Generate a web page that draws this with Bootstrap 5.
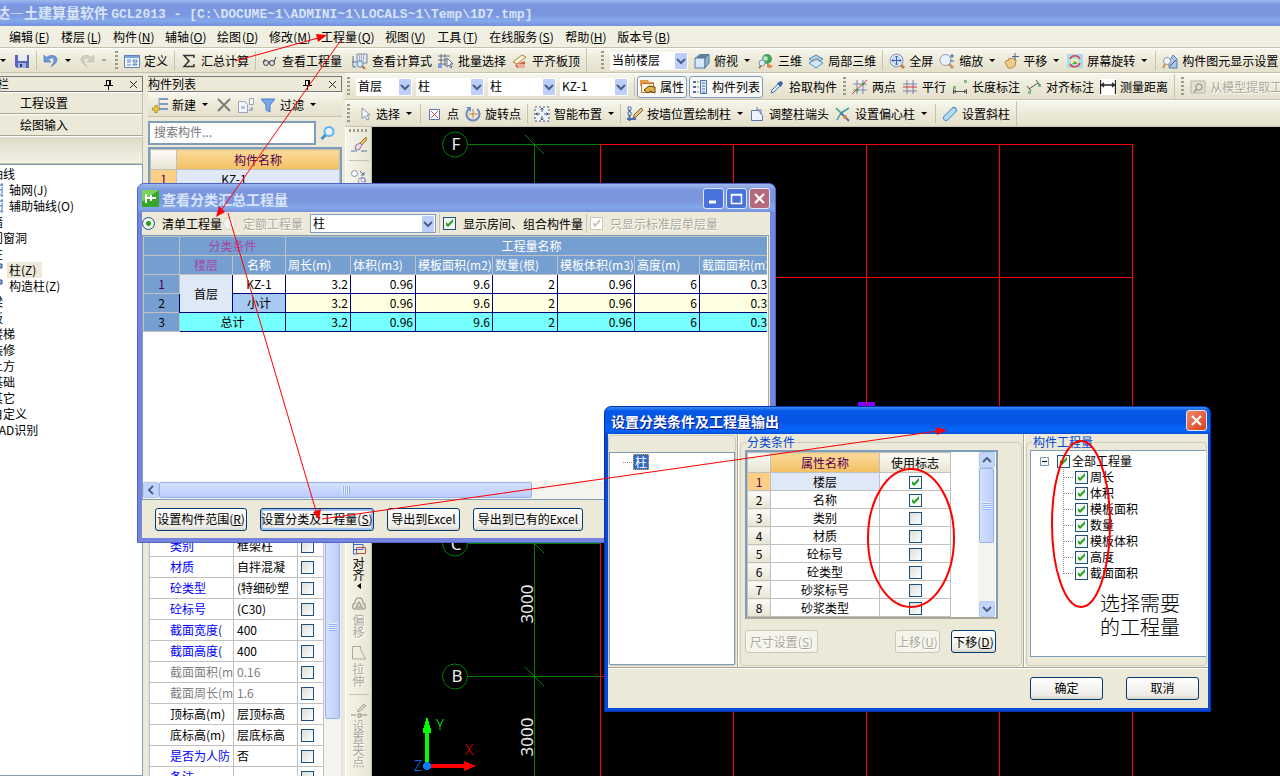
<!DOCTYPE html>
<html lang="zh-CN">
<head>
<meta charset="utf-8">
<meta name="viewport" content="width=device-width, initial-scale=1">
<title>土建算量软件 GCL2013</title>
<link rel="stylesheet" href="https://cdn.jsdelivr.net/npm/bootstrap@5.3.0/dist/css/bootstrap.min.css">
<style>
:root{--face:#ece9d8;--line:#c5c2b0;--edge:#7f9db9;--navy:#003c74}
body{font-family:"Noto Sans CJK SC",sans-serif;font-size:12px;line-height:16px;color:#000;background:var(--face);overflow:hidden;white-space:nowrap}
table,select,input,button{font:inherit;line-height:16px}
svg{flex:none}
.mono{font-family:"Liberation Mono","Noto Sans CJK SC",monospace;font-size:13px}
.app-title{height:26px;padding-left:10px;font-size:14px;font-weight:700;color:#d8e4f8;background:linear-gradient(#9db8ef,#7a96df 20%,#7a96df 55%,#84a8ea 80%,#7790dc);flex:none}
.clip-start{margin-left:-14px}
.app-menu{height:22px;gap:10px;padding-left:9px;background:#f0efe2;border-bottom:1px solid var(--line);flex:none}
.app-menu a{color:#000;text-decoration:none}
.key{display:inline-block;width:18px;text-align:center}
.bar{display:flex;align-items:center;gap:6px;background:linear-gradient(#f7f6ec,#ece9d8 50%,#e4e0cc);border-top:1px solid #fff;border-bottom:1px solid var(--line);flex:none;height:25px;overflow:hidden}
.bar-tall{height:27px;padding-left:2px}
.tool{display:flex;align-items:center;gap:4px;padding:0;border:0;background:none;color:#000;flex:none;line-height:16px}
.tool:disabled,.off{color:#aca899;text-shadow:1px 1px #fff}
.drop{width:6px;height:3px;padding:0;border:0;margin-right:2px;background:#000;clip-path:polygon(0 0,100% 0,50% 100%);flex:none}
.drop:disabled{background:#aca899}
.rule{width:1px;height:19px;background:var(--line);flex:none}
.grip{width:3px;height:19px;background:repeating-linear-gradient(#9d9a8a 0 2px,transparent 2px 4px);flex:none}
.pick{appearance:none;height:18px;border:0;padding:0 18px 2px 2px;border-radius:0;color:#000;flex:none;
background:#fff url("data:image/svg+xml,%3Csvg xmlns='http://www.w3.org/2000/svg' width='12' height='16'%3E%3Crect width='12' height='16' rx='1' fill='%23bccffa'/%3E%3Cpath d='M2 6l4 4 4-4' fill='none' stroke='%234d6185' stroke-width='2'/%3E%3C/svg%3E") no-repeat right 1px center}
.w56{width:56px}.w68{width:68px}.w78{width:78px}.w126{width:126px}
.toggles{display:flex;align-items:center;gap:2px;flex:none}
.toggled{height:22px;padding:0 2px;border:1px solid #7d99bd;border-radius:3px;background:#f8f8f4}
.pane-head{height:16px;border:1px solid #777;border-left:0;font-size:12px;flex:none}
.nav-side{width:143px;overflow:hidden;display:flex;justify-content:flex-end;flex:none;padding-top:3px}
.nav-body{width:170px;flex:none;display:flex;flex-direction:column}
.nav-btn{height:22px;border:1px solid;border-color:#fff var(--line) #a8a595;background:var(--face);text-align:left;padding:0 0 0 46px;color:#000}
.nav-gap{height:28px;background:linear-gradient(#dedac6,#f3f2e6);border:1px solid var(--line);border-top-color:#fff}
.tree{margin:0;padding:1px 0 0;list-style:none;background:#fff;border:1px solid var(--edge);flex:1}
.tree li{height:16px;padding-left:17px;display:flex;align-items:center}
.tree li.sub{padding-left:14px;gap:3px}
.tree li.sub span{padding:0 2px}
.tree li.now span{background:var(--face);padding-right:6px}
.parts{width:194px;flex:none;margin-left:5px;padding-top:3px;display:flex;flex-direction:column;overflow:hidden}
.work{margin-left:3px}
.find{height:24px;width:168px;border:2px solid var(--edge);border-radius:0;padding:0 4px 4px;background:#fff}
.find::placeholder{color:#777}
.list-box{height:388px;margin-top:2px;border:2px solid var(--edge);border-bottom-width:1px;background:#fff;flex:none;overflow:hidden}
.list-box thead tr{height:20px}
.list-box tbody tr{height:18px}
table.sheet{table-layout:fixed;border-collapse:collapse;width:100%}
.sheet td,.sheet th{border:1px solid #c0c0c0;padding:0;text-align:center;font-weight:400;overflow:hidden;vertical-align:middle}
.hd{background:linear-gradient(#fbfaf5,#e8e4d2)}
.sheet .amber{background:linear-gradient(#fbd999,#f3c063);color:#520052}
.sheet .amber-flat{background:#fdcf85;color:#520052}
.sheet .pale{background:#dfe8f6}
.props tr{height:21px}
.props td{text-align:left;line-height:16px}
.props td:nth-child(1){padding-left:20px;color:#00f}
.props td:nth-child(2){padding-left:3px}
.props td:nth-child(3){padding-left:3px}
.props tr.calm td{color:#808080}
.props tr.plain td{color:#000}
.tick{appearance:none;width:13px;height:13px;margin:0;border:1px solid #1c5180;border-radius:0;background:linear-gradient(135deg,#dcdcd7,#fff);display:block;flex:none}
.tick:checked{background:#f6f8f4 url("data:image/svg+xml,%3Csvg xmlns='http://www.w3.org/2000/svg' width='11' height='11'%3E%3Cpath d='M2 4v3l2 2 5-5V1L4 6z' fill='%2321a121'/%3E%3C/svg%3E")}
.tick:disabled{border-color:#cac8bb;background:#fff url("data:image/svg+xml,%3Csvg xmlns='http://www.w3.org/2000/svg' width='11' height='11'%3E%3Cpath d='M2 4v3l2 2 5-5V1L4 6z' fill='%23cac8bb'/%3E%3C/svg%3E")}
.dot{appearance:none;width:13px;height:13px;margin:0;border:1px solid #1c5180;border-radius:50%;background:#f4f4f0;flex:none}
.dot:checked{background:radial-gradient(#21a121 0 2px,#f4f4f0 3px)}
.dot:disabled{border-color:#d6d3c4}
.sb{background:#f4f3ee;flex:none;display:flex}
.sb-v{width:17px;flex-direction:column;align-items:center}
.sb-h{height:18px;align-items:center}
.thumb{background:linear-gradient(90deg,#d3e0fd,#bccdfa);border:1px solid #98b1e4;border-radius:2px;display:flex;align-items:center;justify-content:center}
.sb-v .thumb{width:15px}
.sb-h .thumb{height:16px;background:linear-gradient(#d3e0fd,#bccdfa)}
.ridge{width:8px;height:8px;background:repeating-linear-gradient(#eef4fe 0 1px,#8cb0f8 1px 2px)}
.sb-h .ridge{background:repeating-linear-gradient(90deg,#eef4fe 0 1px,#8cb0f8 1px 2px)}
.sb button{width:16px;height:16px;padding:0;border:1px solid #b6c8f0;border-radius:2px;background:#c4d5fc;display:flex;align-items:center;justify-content:center}
.side-tools{width:27px;background:linear-gradient(90deg,#f6f5ea,#e9e5d2);border-right:1px solid var(--line);border-left:1px solid #fff;display:flex;flex-direction:column;align-items:center;flex:none;overflow:hidden;line-height:12px}
.side-tools .tool{flex-direction:column;gap:2px;line-height:12px;width:14px;white-space:normal}
.side-low{margin-top:354px;gap:7px}
.hr-side{width:20px;height:1px;background:var(--line)}
.grip-h{width:19px;height:3px;margin:2px 0 4px;background:repeating-linear-gradient(90deg,#9d9a8a 0 2px,transparent 2px 4px)}
.stage{background:#000;flex:1;overflow:hidden;min-width:0}
.win{position:absolute;display:flex;flex-direction:column;border-radius:7px 7px 0 0}
.win-a{left:137px;top:183px;width:639px;height:360px;background:#7584dc;border:1px solid #5264c4;padding:0 5px 4px 4px}
.win-b{left:604px;top:406px;width:607px;height:306px;background:#0a48d8;border:1px solid #0831b0;padding:0 2px 3px 3px}
.win-head{height:27px;display:flex;align-items:center;font-size:14px;font-weight:700;flex:none;border-radius:6px 6px 0 0}
.win-a .win-head{gap:3px;color:#d8e4f8;background:linear-gradient(#9db8ef,#7a96df 22%,#7a96df 60%,#84a8ea 85%,#7790dc);margin:0 -5px 0 -4px;padding:1px 5px 0 4px;height:28px}
.win-b .win-head{color:#fff;background:linear-gradient(#3b8df8,#0558e6 15%,#0554e4 55%,#0566fa 85%,#0550dc);margin:0 -2px 0 -3px;padding:0 3px 0 6px;text-shadow:1px 1px #0a1883}
.cap{width:21px;height:21px;border:1px solid #dfe8fa;border-radius:3px;padding:0;display:flex;align-items:center;justify-content:center;background:#4a72dc}
.cap-x{background:#b56a7c}.cap-red{background:linear-gradient(135deg,#ee8a6c,#d8401c)}
.win-body{background:var(--face);flex:1;min-height:0;display:flex;flex-direction:column}
.opts{height:23px;display:flex;align-items:center;gap:7px;flex:none}
.opts label{flex:none}
.opts .dot+label+.dot{margin-left:-6px}
.opts .rule{margin:0 -4px}
.opts .pick{border:1px solid var(--edge);height:19px}
.qty-box{border:1px solid var(--edge);border-right-color:#aca899;background:#fff;padding:0 1px 0 0;height:265px;margin-right:1px;display:flex;flex-direction:column;overflow:hidden;flex:none}
table.qty{table-layout:fixed;border-collapse:collapse;width:634px}
.qty td,.qty th{height:19px;padding:0 2px;border:1px solid navy;font-weight:400;line-height:16px;overflow:hidden}
.qty th{background:#769fd1;color:#fff;border-color:#c0c0c0}
.qty th.plum{color:#a349a4}
.qty tr.sum td.n{background:#ffffe1}
.qty tr.all td{background:#75fffe}
.qty td.n{text-align:right}
.qty td.n:last-child{padding-right:10px}
.win-foot{gap:13px;padding-left:13px}
.xp{height:23px;padding:0;border:1px solid var(--navy);border-radius:3px;background:linear-gradient(#fff,#ecebe5 85%,#d6d0c5);font-size:12px;line-height:16px;color:#000}
.xp:disabled{border-color:#c9c7ba;color:#aca899;background:#f5f4ea;opacity:1;text-shadow:1px 1px #fff}
.xp.hot{box-shadow:inset 0 0 0 2px #a6c1ee}
.w45{width:45px}.w73{width:73px}.w92{width:92px}.w110{width:110px}.w114{width:114px}
.gbox{border:1px solid #d0ceba;border-radius:4px}
.frame{margin:0;padding:0;min-width:0}
.frame>legend{float:none;width:auto;margin:0 0 0 5px;padding:0 1px;font-size:12px;line-height:16px;color:#0046d5}
.col-l{width:130px;padding:1px 1px 1px 0;border-right:1px solid #aca899;flex:none}
.col-m{width:286px;border-right:1px solid #aca899;border-left:1px solid #fff;padding:0 1px 1px;flex:none}
.col-r{border-left:1px solid #fff;padding:0 1px 1px;flex:1;min-width:0}
.white-box{background:#fff;border:1px solid var(--edge)}
.pick-tree{padding:1px 0 0 13px}
.dots{width:9px;border-top:1px dotted #999;margin-top:8px}
.picked{background:#316ac5;color:#fff;outline:1px dotted #e8a040;outline-offset:-1px;padding:0 2px;margin-left:1px}
.attr-box{width:253px;height:169px;margin-left:4px;border:2px solid var(--edge);border-bottom-color:#aca899;overflow:hidden;display:flex;justify-content:space-between;padding-right:1px;background:#fff}
.attr-box table{width:204px;flex:none}
.attr-box tr{height:18px}.attr-box thead tr{height:20px}
.attr-box .tick{margin:1px auto 0}
.attr-btns{gap:11px;margin:11px 25px 0 4px}
.out-box{height:207px;margin-left:3px;border-right:0;padding-top:2px}
.outs{list-style:none;margin:0;padding:0}
.outs label{display:flex;align-items:center;gap:2px;height:16px}
.outs .root-label{padding-left:9px}
.outs .root-label .tick{margin-left:6px}
.kids{list-style:none;margin:0 0 0 32px;padding:0;border-left:1px dotted #999;height:105px}
.kids label::before{content:"";width:9px;border-top:1px dotted #999}
.note{font-size:20px;line-height:24px;font-weight:300;padding:17px 0 0 69px}
.foot{height:41px;border-top:1px solid #aca899;box-shadow:inset 0 1px #fff;display:flex;align-items:center;justify-content:flex-end;gap:23px;padding-right:9px;flex:none}
.marks{position:absolute;left:0;top:0;width:100%;height:100%;pointer-events:none}
</style>
</head>
<body class="vh-100 d-flex flex-column position-relative">
<svg width="0" height="0" class="position-absolute" aria-hidden="true">
<defs>
<symbol id="save" viewBox="0 0 16 16"><path d="M1 2h14v13H3L1 13z" fill="#5a66b8"/><path d="M4 2h9v6H4z" fill="#e6ebf8"/><path d="M4 10h8v5H4z" fill="#9fb0dc"/><path d="M6 11h2v3H6z" fill="#2a3a80"/></symbol>
<symbol id="undo" viewBox="0 0 16 16"><path d="M1 2v7h7l-2.500-2.500C8 4 11 4.500 11 7.500c0 2-1.500 4-3 6 4-2 6-4.500 6-7C14 2 7 1 3.500 4.500z" fill="#6c98dc" stroke="#4470b8" stroke-width=".6"/></symbol>
<symbol id="redo" viewBox="0 0 16 16"><path d="M15 2v7H8l2.500-2.500C8 4 5 4.500 5 7.500c0 2 1.500 4 3 6-4-2-6-4.500-6-7C2 2 9 1 12.500 4.500z" fill="#d2d0c4" stroke="#b8b5a6" stroke-width=".6"/></symbol>
<symbol id="define" viewBox="0 0 16 16"><path d="M.5 2.500h15v12H.5z" fill="#f4f8ff" stroke="#5a82b8"/><path d="M1 3h14v2H1z" fill="#7ba2d8"/><path d="M3 7h4M3 9h4M3 12h4M9 7h4v2H9zM9 11h4v1H9z" stroke="#5a82b8" fill="none"/></symbol>
<symbol id="glasses" viewBox="0 0 16 16"><circle cx="4" cy="10" r="2.500" fill="#dde" stroke="#444"/><circle cx="10" cy="10" r="2.500" fill="#dde" stroke="#444"/><path d="M6 9h2M12 9l2-5M1 9l2-3" stroke="#444" fill="none"/></symbol>
<symbol id="calc" viewBox="0 0 16 16"><path d="M5 1h10v9H5z" fill="#e4e8f0" stroke="#7a8498"/><path d="M7 3h6M7 5h6M7 7h6" stroke="#66748c" stroke-dasharray="1 1"/><path d="M1 3v11h3M0 9h4" stroke="#5470a8" fill="none"/><circle cx="8" cy="11" r="3.200" fill="#cfe6fb" stroke="#5c84b4"/><path d="M10 13l3 3" stroke="#c07030" stroke-width="2"/></symbol>
<symbol id="batch" viewBox="0 0 16 16"><path d="M0 3h12M0 7h10M0 11h8M3 1v12M7 1v12" stroke="#666f80" fill="none"/><path d="M0 11h4v4H0z" fill="#7aa0dc"/><path d="M9 5v9l2-2 2 3 1-1-2-3h3z" fill="#fff" stroke="#556a98"/></symbol>
<symbol id="slab" viewBox="0 0 16 16"><path d="M1 9l9-7 4 2-9 7z" fill="#fff8e0" stroke="#b08028"/><path d="M3 12l2 3h8V8z" fill="#d8603c"/><path d="M5 12h8M6 14h7" stroke="#fff"/></symbol>
<symbol id="cube" viewBox="0 0 16 16"><path d="M1 5l5-4h9l-4 4z" fill="#5f7e9c"/><path d="M1 5h10v10H1z" fill="#d6e9fa" stroke="#54789c"/><path d="M11 5l4-4v9l-4 5z" fill="#8fb0d0" stroke="#54789c"/></symbol>
<symbol id="three" viewBox="0 0 16 16"><circle cx="9" cy="6" r="5" fill="#46a35a"/><path d="M6 3l4 1-1 4-4-1z" fill="#bfe8c4"/><circle cx="4" cy="10" r="3" fill="#dcebf8" stroke="#7d95ae"/><path d="M9 10l3 2 3 1-3 2-3-1z" fill="#e07c30"/><path d="M1 15l2-2" stroke="#b07038" stroke-width="2"/></symbol>
<symbol id="part3" viewBox="0 0 16 16"><path d="M1 6l7-4 7 4-7 4z" fill="#a9d4f2" stroke="#4a8cc0"/><path d="M1 10l7-4 7 4-7 5z" fill="#d0e8f8" stroke="#4a8cc0"/><path d="M5 8l6-3" stroke="#e08030"/></symbol>
<symbol id="full" viewBox="0 0 16 16"><circle cx="7.500" cy="7.500" r="6.500" fill="#d8e6fa" stroke="#8493b4"/><path d="M7.500 3v9M3 7.500h9M6 4.500L7.500 3 9 4.500M6 10.500L7.500 12 9 10.500M4.500 6L3 7.500 4.500 9M10.500 6L12 7.500 10.500 9" stroke="#3b5fa8" fill="none"/><path d="M12 12l3 3" stroke="#c08040" stroke-width="3"/></symbol>
<symbol id="zoomer" viewBox="0 0 16 16"><circle cx="6.500" cy="7" r="5.500" fill="#e8f2fc" stroke="#8c9cb4"/><path d="M10 11l4 4" stroke="#c89860" stroke-width="3"/><path d="M11 3h4M13 1v4M11 8h4" stroke="#3b5fa8"/></symbol>
<symbol id="hand" viewBox="0 0 16 16"><path d="M2 9l2-2 1 1 1-3 2 1 1-1 4 2-1 6-3 2H5z" fill="#eecb86" stroke="#b48c48"/><path d="M12 0v7M9 3.500h7" stroke="#4c6090"/></symbol>
<symbol id="spin" viewBox="0 0 16 16"><path d="M0 1h16v14H0z" fill="#a8dcf4"/><path d="M3 6a5.500 5.500 0 0 1 10 0M13 10a5.500 5.500 0 0 1-10 1" fill="none" stroke="#e04a3c" stroke-width="1.600"/><path d="M4 6h7v5H4z" fill="#f4f0b0"/><path d="M5 11l3-3 3 3z" fill="#58a850"/></symbol>
<symbol id="show" viewBox="0 0 16 16"><path d="M7 9l4-7 4 4v9H7z" fill="#a9c6ec" stroke="#5878a8"/><circle cx="5" cy="8" r="3.500" fill="#f4f8fc" stroke="#8c98a8"/><path d="M3 11l-2 4" stroke="#c89050" stroke-width="2"/><path d="M8 13l6-6" stroke="#405070"/></symbol>
<symbol id="prop" viewBox="0 0 16 16"><path d="M0 1h8l1 2h5v4H0z" fill="#e89a48"/><path d="M1.500 4.500h12v9h-12z" fill="#fdf3dc" stroke="#b87830"/><path d="M4 11l5-4 6 1v6l-5-2-2 2z" fill="#e0b440" stroke="#5a4418"/></symbol>
<symbol id="listing" viewBox="0 0 16 16"><path d="M8.500 1.500h6v13h-6z" fill="#dfeaff" stroke="#4a70b0"/><path d="M10 4h3M10 7h3M10 10h3M10 13h3" stroke="#4a70b0"/><path d="M1 2h3v2H1zM1 7h3v2H1zM1 12h3v2H1z" fill="#4a70b0"/><path d="M5 3h2M5 8h2M5 13h2" stroke="#888"/></symbol>
<symbol id="dropper" viewBox="0 0 16 16"><path d="M2 14l1-3 6-6 2 2-6 6z" fill="#d8ecfc" stroke="#4878b0"/><path d="M8 4l4 4 2-4-2-2z" fill="#3a68a8"/></symbol>
<symbol id="twopt" viewBox="0 0 16 16"><path d="M1 5h14M1 11h14M5 1v14M11 1v14" stroke="#8088b8"/><path d="M0 15L15 1" stroke="#d83030"/><circle cx="5" cy="11" r="1.500" fill="#4aa04a"/><circle cx="11" cy="5" r="1.500" fill="#4aa04a"/></symbol>
<symbol id="para" viewBox="0 0 16 16"><path d="M1 5h14M5 1v14M11 1v14" stroke="#7880b0"/><path d="M1 8h14" stroke="#d83030"/><path d="M1 12h14" stroke="#7880b0"/></symbol>
<symbol id="len" viewBox="0 0 16 16"><path d="M1 7h3v3H1zM12 1h3v3h-3z" fill="#7cc47c"/><path d="M1.500 10v5M14.500 10v5M2 12.500h12M4 11l-2 1.500L4 14M12 11l2 1.500-2 1.500" stroke="#555" fill="none"/></symbol>
<symbol id="aligned" viewBox="0 0 16 16"><path d="M2 12h3v3H2zM12 5h3v3h-3z" fill="#7cc47c"/><path d="M3 10l9-6M1 7l4 5M10 1l4 5" stroke="#555" fill="none"/></symbol>
<symbol id="meas" viewBox="0 0 16 16"><path d="M0 0h16v16H0z" fill="#fff"/><path d="M.5 1v14M15.500 1v14M1 6h14M4 4L1.500 6 4 8M12 4l2.500 2L12 8" stroke="#222" fill="none" stroke-width="1.300"/></symbol>
<symbol id="model" viewBox="0 0 16 16"><path d="M1 2h14v12H1z" fill="#e4e1d2" stroke="#b8b5a5"/><circle cx="9" cy="8" r="3" fill="none" stroke="#a8a595" stroke-width="1.500"/><path d="M7 10l-3 3" stroke="#a8a595" stroke-width="2"/></symbol>
<symbol id="arrow" viewBox="0 0 16 16"><path d="M6 2v11l3-3 2 4 2-1-2-4h3z" fill="#f4f6fc" stroke="#8c94ac"/></symbol>
<symbol id="point" viewBox="0 0 16 16"><path d="M2.500 3.500h10v10h-10z" fill="#fff" stroke="#5878b8"/><path d="M4 5l7 7M11 5l-7 7" stroke="#d04860"/></symbol>
<symbol id="rot" viewBox="0 0 16 16"><path d="M4 3a6.500 6.500 0 1 0 8 0" fill="none" stroke="#6c8cc0" stroke-width="2"/><path d="M1 1h5v5z" fill="#6c8cc0"/><path d="M8 3v9M4 8h9" stroke="#c08048"/></symbol>
<symbol id="smart" viewBox="0 0 16 16"><path d="M1 1h14v14H1z" fill="#f0f4fc" stroke="#404c68" stroke-dasharray="2 2"/><path d="M8 2v4M8 10v4M2 8h4M10 8h4M6.500 3.500L8 2l1.500 1.500M6.500 12.500L8 14l1.500-1.500M3.500 6.500L2 8l1.500 1.500M12.500 6.500L14 8l-1.500 1.500" stroke="#38486c" fill="none"/></symbol>
<symbol id="wall" viewBox="0 0 16 16"><path d="M2.500 1v14M0 13h9" stroke="#4870b0" stroke-width="2"/><path d="M1 1h3v3H1zM1 6h3v3H1z" fill="#fff" stroke="#4870b0"/><path d="M6 12l1-3 7-7 2 2-7 7z" fill="#e8c080" stroke="#806040"/></symbol>
<symbol id="headc" viewBox="0 0 16 16"><path d="M2.500 4.500h7l4 5v5h-11z" fill="#eef4ff" stroke="#5878b0"/><path d="M8 1v3h4v4" fill="none" stroke="#5878b0"/></symbol>
<symbol id="ecc" viewBox="0 0 16 16"><path d="M1 2l5 5-4 7M6 7l8-5" stroke="#38a0a0" fill="none" stroke-width="1.500"/><path d="M6 7l8 8" stroke="#5070b8" stroke-width="2"/><circle cx="10" cy="11" r="2" fill="#e08040"/></symbol>
<symbol id="tilt" viewBox="0 0 16 16"><path d="M4 12L12 4" stroke="#4c8cc8" stroke-width="6" stroke-linecap="round"/><path d="M4 12L12 4" stroke="#b4dcf8" stroke-width="4" stroke-linecap="round"/></symbol>
<symbol id="newi" viewBox="0 0 16 16"><path d="M7 2h9M7 7h9M7 12h9" stroke="#7c9cc4" stroke-width="2"/><path d="M7 1v12" stroke="#7c9cc4"/><path d="M4 8v8M0 12h8" stroke="#b89020" stroke-width="3"/><path d="M4 9v6M1 12h6" stroke="#ffe060"/></symbol>
<symbol id="del" viewBox="0 0 16 16"><path d="M2 2l12 12M14 2L2 14" stroke="#7c7c7c" stroke-width="2"/></symbol>
<symbol id="copy" viewBox="0 0 16 16"><path d="M.500 4.500h6l3 3v8h-9zM11.500 1.500h4v6h-4z" fill="#f4f6fc" stroke="#98a4c0"/><path d="M3 9h4v3H3z" fill="#b8c4dc"/><path d="M14 10v3h-3" stroke="#5878c8" fill="none"/></symbol>
<symbol id="funnel" viewBox="0 0 16 16"><path d="M1 2h14L10 8v7l-4-2V8z" fill="#7aa8ec" stroke="#5080cc"/></symbol>
<symbol id="search" viewBox="0 0 16 16"><circle cx="9" cy="6.500" r="4.500" fill="#e4f4ff" stroke="#64b4ec" stroke-width="2"/><path d="M5.500 10l-4 4" stroke="#4890cc" stroke-width="3"/></symbol>
<symbol id="brush" viewBox="0 0 16 16"><path d="M0 15h6M10 15h6" stroke="#5878b0"/><path d="M9 7l6-6 1 2-5 6z" fill="#ecc060" stroke="#a07828"/><path d="M5 9l4-2 2 2-3 5-4-1z" fill="#f0d8e8" stroke="#8080a0"/></symbol>
<symbol id="circs" viewBox="0 0 16 16"><circle cx="3.500" cy="4.500" r="3" fill="#fff" stroke="#8090b0"/><circle cx="11" cy="12" r="3.500" fill="#fff" stroke="#8090b0"/><circle cx="12" cy="11" r="2" fill="none" stroke="#8090b0"/><path d="M9 2l4 4M13 3v3h-3" stroke="#4870b0" fill="none"/></symbol>
<symbol id="pin" viewBox="0 0 9 11"><path d="M2.500 1v5M2 1.500h4M5.500 1v5M6.500 1v5M0 6.500h9M4.500 7v4" stroke="#000" fill="none"/></symbol>
<symbol id="cross" viewBox="0 0 9 9"><path d="M1 1l7 7M8 1L1 8" stroke="#333" fill="none"/></symbol>
<symbol id="gridi" viewBox="0 0 16 16"><path d="M2 1v14M8 1v14M14 1v14M0 3h16M0 8h16M0 13h16" stroke="#3c6cc0" stroke-dasharray="3 1"/></symbol>
<symbol id="cols" viewBox="0 0 16 16"><path d="M2 2h12v4h-3v6H8V7H2z" fill="#8cacdc" stroke="#305090"/></symbol>
<symbol id="chev" viewBox="0 0 10 6"><path d="M1 5l4-4 4 4" fill="none" stroke="#4d6185" stroke-width="2"/></symbol>
</defs>
</svg>

<header class="app-title d-flex align-items-center overflow-hidden"><span class="clip-start">达—土建算量软件 <span class="mono">GCL2013 - [C:\DOCUME~1\ADMINI~1\LOCALS~1\Temp\1D7.tmp]</span></span></header>
<nav class="app-menu d-flex align-items-center">
<a href="#">编辑<span class="key">(<u>E</u>)</span></a><a href="#">楼层<span class="key">(<u>L</u>)</span></a><a href="#">构件<span class="key">(<u>N</u>)</span></a><a href="#">辅轴<span class="key">(<u>O</u>)</span></a><a href="#">绘图<span class="key">(<u>D</u>)</span></a><a href="#">修改<span class="key">(<u>M</u>)</span></a><a href="#">工程量<span class="key">(<u>Q</u>)</span></a><a href="#">视图<span class="key">(<u>V</u>)</span></a><a href="#">工具<span class="key">(<u>T</u>)</span></a><a href="#">在线服务<span class="key">(<u>S</u>)</span></a><a href="#">帮助<span class="key">(<u>H</u>)</span></a><a href="#">版本号<span class="key">(<u>B</u>)</span></a>
</nav>
<div class="bar">
<button class="drop" aria-label="更多"></button><button class="tool" aria-label="保存"><svg width="16" height="16"><use href="#save"/></svg></button><span class="rule"></span>
<button class="tool" aria-label="撤销"><svg width="16" height="16"><use href="#undo"/></svg></button><button class="drop" aria-label="撤销列表"></button>
<button class="tool" aria-label="恢复" disabled><svg width="16" height="16"><use href="#redo"/></svg></button><button class="drop" aria-label="恢复列表" disabled></button>
<span class="grip"></span>
<button class="tool"><svg width="16" height="16"><use href="#define"/></svg>定义</button><span class="rule"></span>
<button class="tool"><svg width="16" height="16" viewBox="0 0 16 16"><path d="M13 5V2.500H3L8 8l-5 5.500h10V11" fill="none" stroke="#333" stroke-width="1.500"/></svg>汇总计算</button><span class="rule"></span>
<button class="tool"><svg width="16" height="16"><use href="#glasses"/></svg>查看工程量</button>
<button class="tool ms-1"><svg width="16" height="16"><use href="#calc"/></svg>查看计算式</button>
<button class="tool"><svg width="16" height="16"><use href="#batch"/></svg>批量选择</button>
<button class="tool"><svg width="16" height="16"><use href="#slab"/></svg>平齐板顶</button><span class="rule h-100"></span>
<span class="grip ms-2"></span>
<select class="pick w78" aria-label="楼层范围"><option>当前楼层</option></select>
<button class="tool"><svg width="16" height="16"><use href="#cube"/></svg>俯视</button><button class="drop" aria-label="视角"></button>
<button class="tool"><svg width="16" height="16"><use href="#three"/></svg>三维</button>
<button class="tool"><svg width="16" height="16"><use href="#part3"/></svg>局部三维</button><span class="rule"></span>
<button class="tool"><svg width="16" height="16"><use href="#full"/></svg>全屏</button>
<button class="tool"><svg width="16" height="16"><use href="#zoomer"/></svg>缩放</button><button class="drop" aria-label="缩放列表"></button>
<button class="tool"><svg width="16" height="16"><use href="#hand"/></svg>平移</button><button class="drop" aria-label="平移列表"></button>
<button class="tool"><svg width="16" height="16"><use href="#spin"/></svg>屏幕旋转</button><button class="drop" aria-label="旋转列表"></button><span class="rule"></span>
<button class="tool"><svg width="16" height="16"><use href="#show"/></svg>构件图元显示设置</button>
</div>

<main class="d-flex flex-fill overflow-hidden">
<aside class="nav-side"><div class="nav-body">
<div class="pane-head d-flex align-items-center justify-content-between ps-4 pe-1"><span>栏</span><span class="d-flex gap-3 align-items-center"><svg width="9" height="11"><use href="#pin"/></svg><svg width="9" height="9"><use href="#cross"/></svg></span></div>
<button class="nav-btn">工程设置</button><button class="nav-btn">绘图输入</button><div class="nav-gap"></div>
<ul class="tree"><li>轴线</li><li class="sub"><svg width="16" height="16"><use href="#gridi"/></svg><span>轴网(J)</span></li><li class="sub"><svg width="16" height="16"><use href="#gridi"/></svg><span>辅助轴线(O)</span></li><li>墙</li><li>门窗洞</li><li>柱</li><li class="sub now"><svg width="16" height="16"><use href="#cols"/></svg><span>柱(Z)</span></li><li class="sub"><svg width="16" height="16"><use href="#cols"/></svg><span>构造柱(Z)</span></li><li>梁</li><li>板</li><li>楼梯</li><li>装修</li><li>土方</li><li>基础</li><li>其它</li><li>自定义</li><li>CAD识别</li></ul>
</div></aside>
<section class="parts">
<div class="pane-head d-flex align-items-center justify-content-between pe-1"><span>构件列表</span><span class="d-flex gap-3 align-items-center"><svg width="9" height="11"><use href="#pin"/></svg><svg width="9" height="9"><use href="#cross"/></svg></span></div>
<div class="bar ps-1"><button class="tool"><svg width="16" height="16"><use href="#newi"/></svg>新建</button><button class="drop" aria-label="新建列表"></button><button class="tool" aria-label="删除"><svg width="16" height="16"><use href="#del"/></svg></button><button class="tool" aria-label="复制"><svg width="16" height="16"><use href="#copy"/></svg></button><button class="tool"><svg width="16" height="16"><use href="#funnel"/></svg>过滤</button><button class="drop" aria-label="过滤列表"></button></div>
<div class="d-flex align-items-center gap-1 pt-1"><input class="find" type="text" placeholder="搜索构件..." aria-label="搜索构件"><button class="tool" aria-label="搜索"><svg width="16" height="16"><use href="#search"/></svg></button></div>
<div class="list-box"><table class="sheet"><colgroup><col style="width:26px"><col></colgroup><thead><tr><th class="hd"></th><th class="amber">构件名称</th></tr></thead><tbody><tr><td class="amber-flat">1</td><td class="pale pe-5">KZ-1</td></tr></tbody></table></div>
<div class="d-flex flex-fill overflow-hidden bg-white border-start border-end">
<table class="sheet props align-self-start"><colgroup><col style="width:84px"><col style="width:64px"><col></colgroup><tbody>
<tr><td>类别</td><td>框架柱</td><td><input type="checkbox" class="tick" aria-label="类别"></td></tr>
<tr><td>材质</td><td>自拌混凝</td><td><input type="checkbox" class="tick" aria-label="材质"></td></tr>
<tr><td>砼类型</td><td>(特细砂塑</td><td><input type="checkbox" class="tick" aria-label="砼类型"></td></tr>
<tr><td>砼标号</td><td>(C30)</td><td><input type="checkbox" class="tick" aria-label="砼标号"></td></tr>
<tr><td>截面宽度(</td><td>400</td><td><input type="checkbox" class="tick" aria-label="截面宽度"></td></tr>
<tr><td>截面高度(</td><td>400</td><td><input type="checkbox" class="tick" aria-label="截面高度"></td></tr>
<tr class="calm"><td>截面面积(m</td><td>0.16</td><td><input type="checkbox" class="tick" aria-label="截面面积"></td></tr>
<tr class="calm"><td>截面周长(m</td><td>1.6</td><td><input type="checkbox" class="tick" aria-label="截面周长"></td></tr>
<tr class="plain"><td>顶标高(m)</td><td>层顶标高</td><td><input type="checkbox" class="tick" aria-label="顶标高"></td></tr>
<tr class="plain"><td>底标高(m)</td><td>层底标高</td><td><input type="checkbox" class="tick" aria-label="底标高"></td></tr>
<tr><td>是否为人防</td><td>否</td><td><input type="checkbox" class="tick" aria-label="是否为人防"></td></tr>
<tr><td>备注</td><td></td><td><input type="checkbox" class="tick" aria-label="备注"></td></tr>
</tbody></table>
<div class="sb sb-v"><div class="thumb" style="height:184px"><span class="ridge"></span></div></div>
</div>
</section>
<section class="work d-flex flex-column flex-fill overflow-hidden">
<div class="bar bar-tall">
<span class="grip"></span>
<span class="d-flex gap-1"><select class="pick w56" aria-label="楼层"><option>首层</option></select><select class="pick w68" aria-label="构件类别"><option>柱</option></select><select class="pick w68" aria-label="构件类型"><option>柱</option></select><select class="pick w68" aria-label="构件"><option>KZ-1</option></select></span>
<span class="toggles"><span class="rule"></span><button class="tool toggled"><svg width="16" height="16"><use href="#prop"/></svg>属性</button><button class="tool toggled"><svg width="16" height="16"><use href="#listing"/></svg>构件列表</button></span>
<button class="tool"><svg width="16" height="16"><use href="#dropper"/></svg>拾取构件</button><span class="grip"></span>
<button class="tool"><svg width="16" height="16"><use href="#twopt"/></svg>两点</button>
<button class="tool"><svg width="16" height="16"><use href="#para"/></svg>平行</button>
<button class="tool"><svg width="16" height="16"><use href="#len"/></svg>长度标注</button>
<button class="tool"><svg width="16" height="16"><use href="#aligned"/></svg>对齐标注</button>
<button class="tool"><svg width="16" height="16"><use href="#meas"/></svg>测量距离</button>
<span class="rule h-100"></span><span class="grip"></span>
<button class="tool" disabled><svg width="16" height="16"><use href="#model"/></svg>从模型提取工程量</button>
</div>
<div class="bar bar-tall">
<span class="grip"></span>
<button class="tool"><svg width="16" height="16"><use href="#arrow"/></svg>选择</button><button class="drop" aria-label="选择列表"></button><span class="rule"></span>
<button class="tool"><svg width="16" height="16"><use href="#point"/></svg>点</button>
<button class="tool"><svg width="16" height="16"><use href="#rot"/></svg>旋转点</button><span class="rule"></span>
<button class="tool"><svg width="16" height="16"><use href="#smart"/></svg>智能布置</button><button class="drop m-0" aria-label="布置列表"></button><span class="rule"></span>
<button class="tool"><svg width="16" height="16"><use href="#wall"/></svg>按墙位置绘制柱</button><button class="drop m-0" aria-label="绘制列表"></button>
<button class="tool"><svg width="16" height="16"><use href="#headc"/></svg>调整柱端头</button>
<button class="tool"><svg width="16" height="16"><use href="#ecc"/></svg>设置偏心柱</button><button class="drop" aria-label="偏心列表"></button><span class="rule"></span>
<button class="tool"><svg width="16" height="16"><use href="#tilt"/></svg>设置斜柱</button><span class="rule h-100"></span>
</div>
<div class="d-flex flex-fill overflow-hidden">
<div class="side-tools">
<span class="grip-h"></span><button class="tool" aria-label="格式刷"><svg width="16" height="16"><use href="#brush"/></svg></button><span class="hr-side my-2 flex-shrink-0"></span><button class="tool" aria-label="复制图元"><svg width="16" height="16"><use href="#circs"/></svg></button>
<div class="side-low d-flex flex-column align-items-center">
<button class="tool"><svg width="16" height="16" viewBox="0 0 16 16"><path d="M2.500 3v12h4M3 5.500h9v5H3" fill="none" stroke="#3868d0"/><path d="M5.500 8.500h9v6h-9z" fill="none" stroke="#c04848"/></svg>对齐<svg width="4" height="6" viewBox="0 0 4 6"><path d="M4 0v6L0 3z"/></svg></button>
<button class="tool" disabled><svg width="16" height="16" viewBox="0 0 16 16"><path d="M8 2c3 0 4 2 4 5 3 1 3 6 0 6H4c-3 0-3-5 0-6 0-3 1-5 4-5zM8 6l3 5H5z" fill="none" stroke="#aca899" stroke-width="1.500"/></svg>偏移</button>
<button class="tool" disabled><svg width="16" height="16" viewBox="0 0 16 16"><path d="M1.500 1.500h8v3M1.500 2v12h13L10 5" fill="none" stroke="#aca899"/></svg>拉伸</button>
<span class="hr-side flex-shrink-0"></span>
<button class="tool" disabled><svg width="16" height="16" viewBox="0 0 16 16"><path d="M6 9l7-7 2 2-7 6z" fill="#d8d5c6" stroke="#aca899"/><path d="M0 13h5M11 13h5M7 12h3v3H7z" fill="none" stroke="#8c897c"/></svg>设置夹点</button>
</div>
</div>
<div class="stage"><svg width="100%" height="100%"><g transform="translate(-372 -127)" fill="none" stroke="#008000" shape-rendering="crispEdges">
<path d="M468 144.500h132M534.500 144v640M525 135l19 19M468 543.500h132M525 534l19 19M468 676.500h132M525 667l19 19"/>
<g shape-rendering="auto"><circle cx="455" cy="144.500" r="12.500"/><circle cx="455" cy="543.500" r="12.500"/><circle cx="455" cy="676.500" r="12.500"/></g>
<path stroke="#f00" d="M600 144.500h533M600.500 144v640M733.500 144v640M866.500 144v640M999.500 144v640M1132.500 144v640M600 277.500h533M600 676.500h533"/>
<path fill="#8000ff" stroke="none" d="M858 402h8v8h-8zM867 402h8v8h-8z"/>
<g fill="#e8e8e8" stroke="none" font-family="Noto Sans, sans-serif" font-size="17" text-anchor="middle"><text x="456" y="150">F</text><text x="456" y="550">C</text><text x="457" y="682">B</text><text transform="translate(533 604) rotate(-90)">3000</text><text transform="translate(533 737) rotate(-90)">3000</text></g>
<g stroke="none"><path fill="#0f0" d="M425 732h4v32h-4zM427 716l4 14v3h-8v-3z"/><path fill="#f00" d="M430 764h34v4h-34zM476 766l-12 5v-10z"/><circle cx="427" cy="766" r="4" fill="#0080ff"/></g>
<g stroke="none" font-family="Open Sans, sans-serif" font-weight="300" font-size="15" text-anchor="middle"><text x="440" y="730" fill="#0f0">Y</text><text x="469" y="755" fill="#f00">X</text><text x="418" y="771" fill="#0080ff">Z</text></g>
</g></svg></div>
</div>
</section>
</main>

<section class="win win-a" role="dialog" aria-label="查看分类汇总工程量">
<div class="win-head"><svg width="17" height="17" viewBox="0 0 17 17"><rect width="17" height="17" rx="1" fill="#37a52c"/><path d="M0 0h17L0 12z" fill="#7cd05c"/><path d="M4 4v9M4 8h10M9 5v6" stroke="#fff" stroke-width="2"/></svg><span class="flex-fill">查看分类汇总工程量</span>
<span class="toggles"><button class="cap" aria-label="最小化"><svg width="13" height="13"><path d="M2 10h7" stroke="#fff" stroke-width="3"/></svg></button><button class="cap" aria-label="最大化"><svg width="13" height="13"><path d="M1.500 2.500h10v9h-10zM1 3h11" stroke="#fff" stroke-width="1.500" fill="none"/></svg></button><button class="cap cap-x" aria-label="关闭"><svg width="13" height="13"><path d="M2 2l9 9M11 2l-9 9" stroke="#fff" stroke-width="2.200"/></svg></button></span></div>
<div class="win-body">
<div class="opts"><input class="dot" type="radio" name="kind" id="k1" checked><label for="k1">清单工程量</label><input class="dot" type="radio" name="kind" id="k2" disabled><label for="k2" class="off">定额工程量</label><select class="pick w126" aria-label="构件类型"><option>柱</option></select><span class="rule"></span><input class="tick" type="checkbox" id="c1" checked><label for="c1">显示房间、组合构件量</label><span class="rule"></span><input class="tick" type="checkbox" id="c2" checked disabled><label for="c2" class="off">只显示标准层单层量</label></div>
<div class="qty-box"><div class="flex-fill overflow-hidden"><table class="qty"><colgroup><col style="width:36px"><col style="width:53px"><col style="width:53px"><col style="width:65px"><col style="width:65px"><col style="width:77px"><col style="width:65px"><col style="width:77px"><col style="width:65px"><col style="width:78px"></colgroup>
<thead><tr><th></th><th colspan="2" class="plum text-center">分类条件</th><th colspan="7" class="text-center">工程量名称</th></tr>
<tr><th></th><th class="plum text-center">楼层</th><th class="text-center">名称</th><th>周长(m)</th><th>体积(m3)</th><th>模板面积(m2)</th><th>数量(根)</th><th>模板体积(m3)</th><th>高度(m)</th><th>截面面积(m2)</th></tr></thead>
<tbody><tr><th class="text-center" style="color:#520052">1</th><td rowspan="2" class="text-center" style="background:#dfe8f6">首层</td><td class="text-center">KZ-1</td><td class="n">3.2</td><td class="n">0.96</td><td class="n">9.6</td><td class="n">2</td><td class="n">0.96</td><td class="n">6</td><td class="n">0.3</td></tr>
<tr class="sum"><th class="text-center text-black">2</th><td class="text-center" style="background:#a6caf0">小计</td><td class="n">3.2</td><td class="n">0.96</td><td class="n">9.6</td><td class="n">2</td><td class="n">0.96</td><td class="n">6</td><td class="n">0.3</td></tr>
<tr class="all"><th class="text-center text-black">3</th><td colspan="2" class="text-center">总计</td><td class="n">3.2</td><td class="n">0.96</td><td class="n">9.6</td><td class="n">2</td><td class="n">0.96</td><td class="n">6</td><td class="n">0.3</td></tr></tbody></table></div>
<div class="sb sb-h"><button aria-label="向左"><svg width="6" height="10" viewBox="0 0 6 10"><path d="M5 1L1 5l4 4" fill="none" stroke="#4d6185" stroke-width="2"/></svg></button><div class="thumb" style="width:373px"><span class="ridge"></span></div></div></div>
<div class="win-foot d-flex align-items-center flex-fill"><button class="xp w92">设置构件范围(<u>R</u>)</button><button class="xp hot w114">设置分类及工程量(<u>S</u>)</button><button class="xp w73">导出到Excel</button><button class="xp w110">导出到已有的Excel</button></div>
</div>
</section>

<section class="win win-b" role="dialog" aria-label="设置分类条件及工程量输出">
<div class="win-head"><span class="flex-fill">设置分类条件及工程量输出</span><button class="cap cap-red" aria-label="关闭"><svg width="13" height="13"><path d="M2 2l9 9M11 2l-9 9" stroke="#fff" stroke-width="2.200"/></svg></button></div>
<div class="win-body">
<div class="d-flex flex-fill overflow-hidden">
<div class="col-l"><div class="gbox h-100 d-flex flex-column pt-3"><div class="white-box flex-fill d-flex align-items-start pick-tree"><span class="dots"></span><span class="picked">柱</span></div></div></div>
<div class="col-m"><fieldset class="frame gbox h-100"><legend>分类条件</legend>
<div class="attr-box"><table class="sheet"><colgroup><col style="width:23px"><col style="width:109px"><col></colgroup><thead><tr><th class="hd"></th><th class="amber">属性名称</th><th class="hd">使用标志</th></tr></thead><tbody>
<tr><td class="amber-flat">1</td><td class="pale">楼层</td><td><input class="tick" type="checkbox" aria-label="楼层" checked></td></tr>
<tr><td class="hd">2</td><td>名称</td><td><input class="tick" type="checkbox" aria-label="名称" checked></td></tr>
<tr><td class="hd">3</td><td>类别</td><td><input class="tick" type="checkbox" aria-label="类别"></td></tr>
<tr><td class="hd">4</td><td>材质</td><td><input class="tick" type="checkbox" aria-label="材质"></td></tr>
<tr><td class="hd">5</td><td>砼标号</td><td><input class="tick" type="checkbox" aria-label="砼标号"></td></tr>
<tr><td class="hd">6</td><td>砼类型</td><td><input class="tick" type="checkbox" aria-label="砼类型"></td></tr>
<tr><td class="hd">7</td><td>砂浆标号</td><td><input class="tick" type="checkbox" aria-label="砂浆标号"></td></tr>
<tr><td class="hd">8</td><td>砂浆类型</td><td><input class="tick" type="checkbox" aria-label="砂浆类型"></td></tr></tbody></table>
<div class="sb sb-v"><button aria-label="向上"><svg width="10" height="6"><use href="#chev"/></svg></button><div class="thumb" style="height:75px"><span class="ridge"></span></div><button class="mt-auto" aria-label="向下"><svg width="10" height="6" viewBox="0 0 10 6"><path d="M1 1l4 4 4-4" fill="none" stroke="#4d6185" stroke-width="2"/></svg></button></div></div>
<div class="d-flex attr-btns"><button class="xp w73" disabled>尺寸设置(<u>S</u>)</button><button class="xp w45 ms-auto" disabled>上移(<u>U</u>)</button><button class="xp w45">下移(<u>D</u>)</button></div>
</fieldset></div>
<div class="col-r"><fieldset class="frame gbox h-100"><legend>构件工程量</legend><div class="white-box out-box">
<ul class="outs"><li><label class="root-label"><svg width="9" height="9" viewBox="0 0 9 9"><path d="M.5.500h8v8h-8z" fill="#f4f4f0" stroke="#7898b5"/><path d="M2 4.500h5" stroke="#000"/></svg><input class="tick" type="checkbox" checked>全部工程量</label>
<ul class="kids"><li><label><input class="tick" type="checkbox" checked>周长</label></li><li><label><input class="tick" type="checkbox" checked>体积</label></li><li><label><input class="tick" type="checkbox" checked>模板面积</label></li><li><label><input class="tick" type="checkbox" checked>数量</label></li><li><label><input class="tick" type="checkbox" checked>模板体积</label></li><li><label><input class="tick" type="checkbox" checked>高度</label></li><li><label><input class="tick" type="checkbox" checked>截面面积</label></li></ul></li></ul>
<div class="note">选择需要<br>的工程量</div></div></fieldset></div>
</div>
<div class="foot"><button class="xp w73">确定</button><button class="xp w73">取消</button></div>
</div>
</section>

<svg class="marks" aria-hidden="true"><g stroke="#f00" fill="none"><path d="M235 61L318 38M341 40L222 209M228 213L316 511M322 519L938 431"/><g stroke-width="2"><ellipse cx="911" cy="538" rx="43" ry="69"/><ellipse cx="1081" cy="524" rx="29" ry="83"/></g></g>
<g fill="#f00"><path d="M327 35l-9 7-2-8zM216 217l3-11 6 6zM319 520l-6-8 8-3zM947 430l-10 5-1-8z"/></g></svg>
<script src="https://cdn.jsdelivr.net/npm/bootstrap@5.3.0/dist/js/bootstrap.bundle.min.js"></script>
</body>
</html>
